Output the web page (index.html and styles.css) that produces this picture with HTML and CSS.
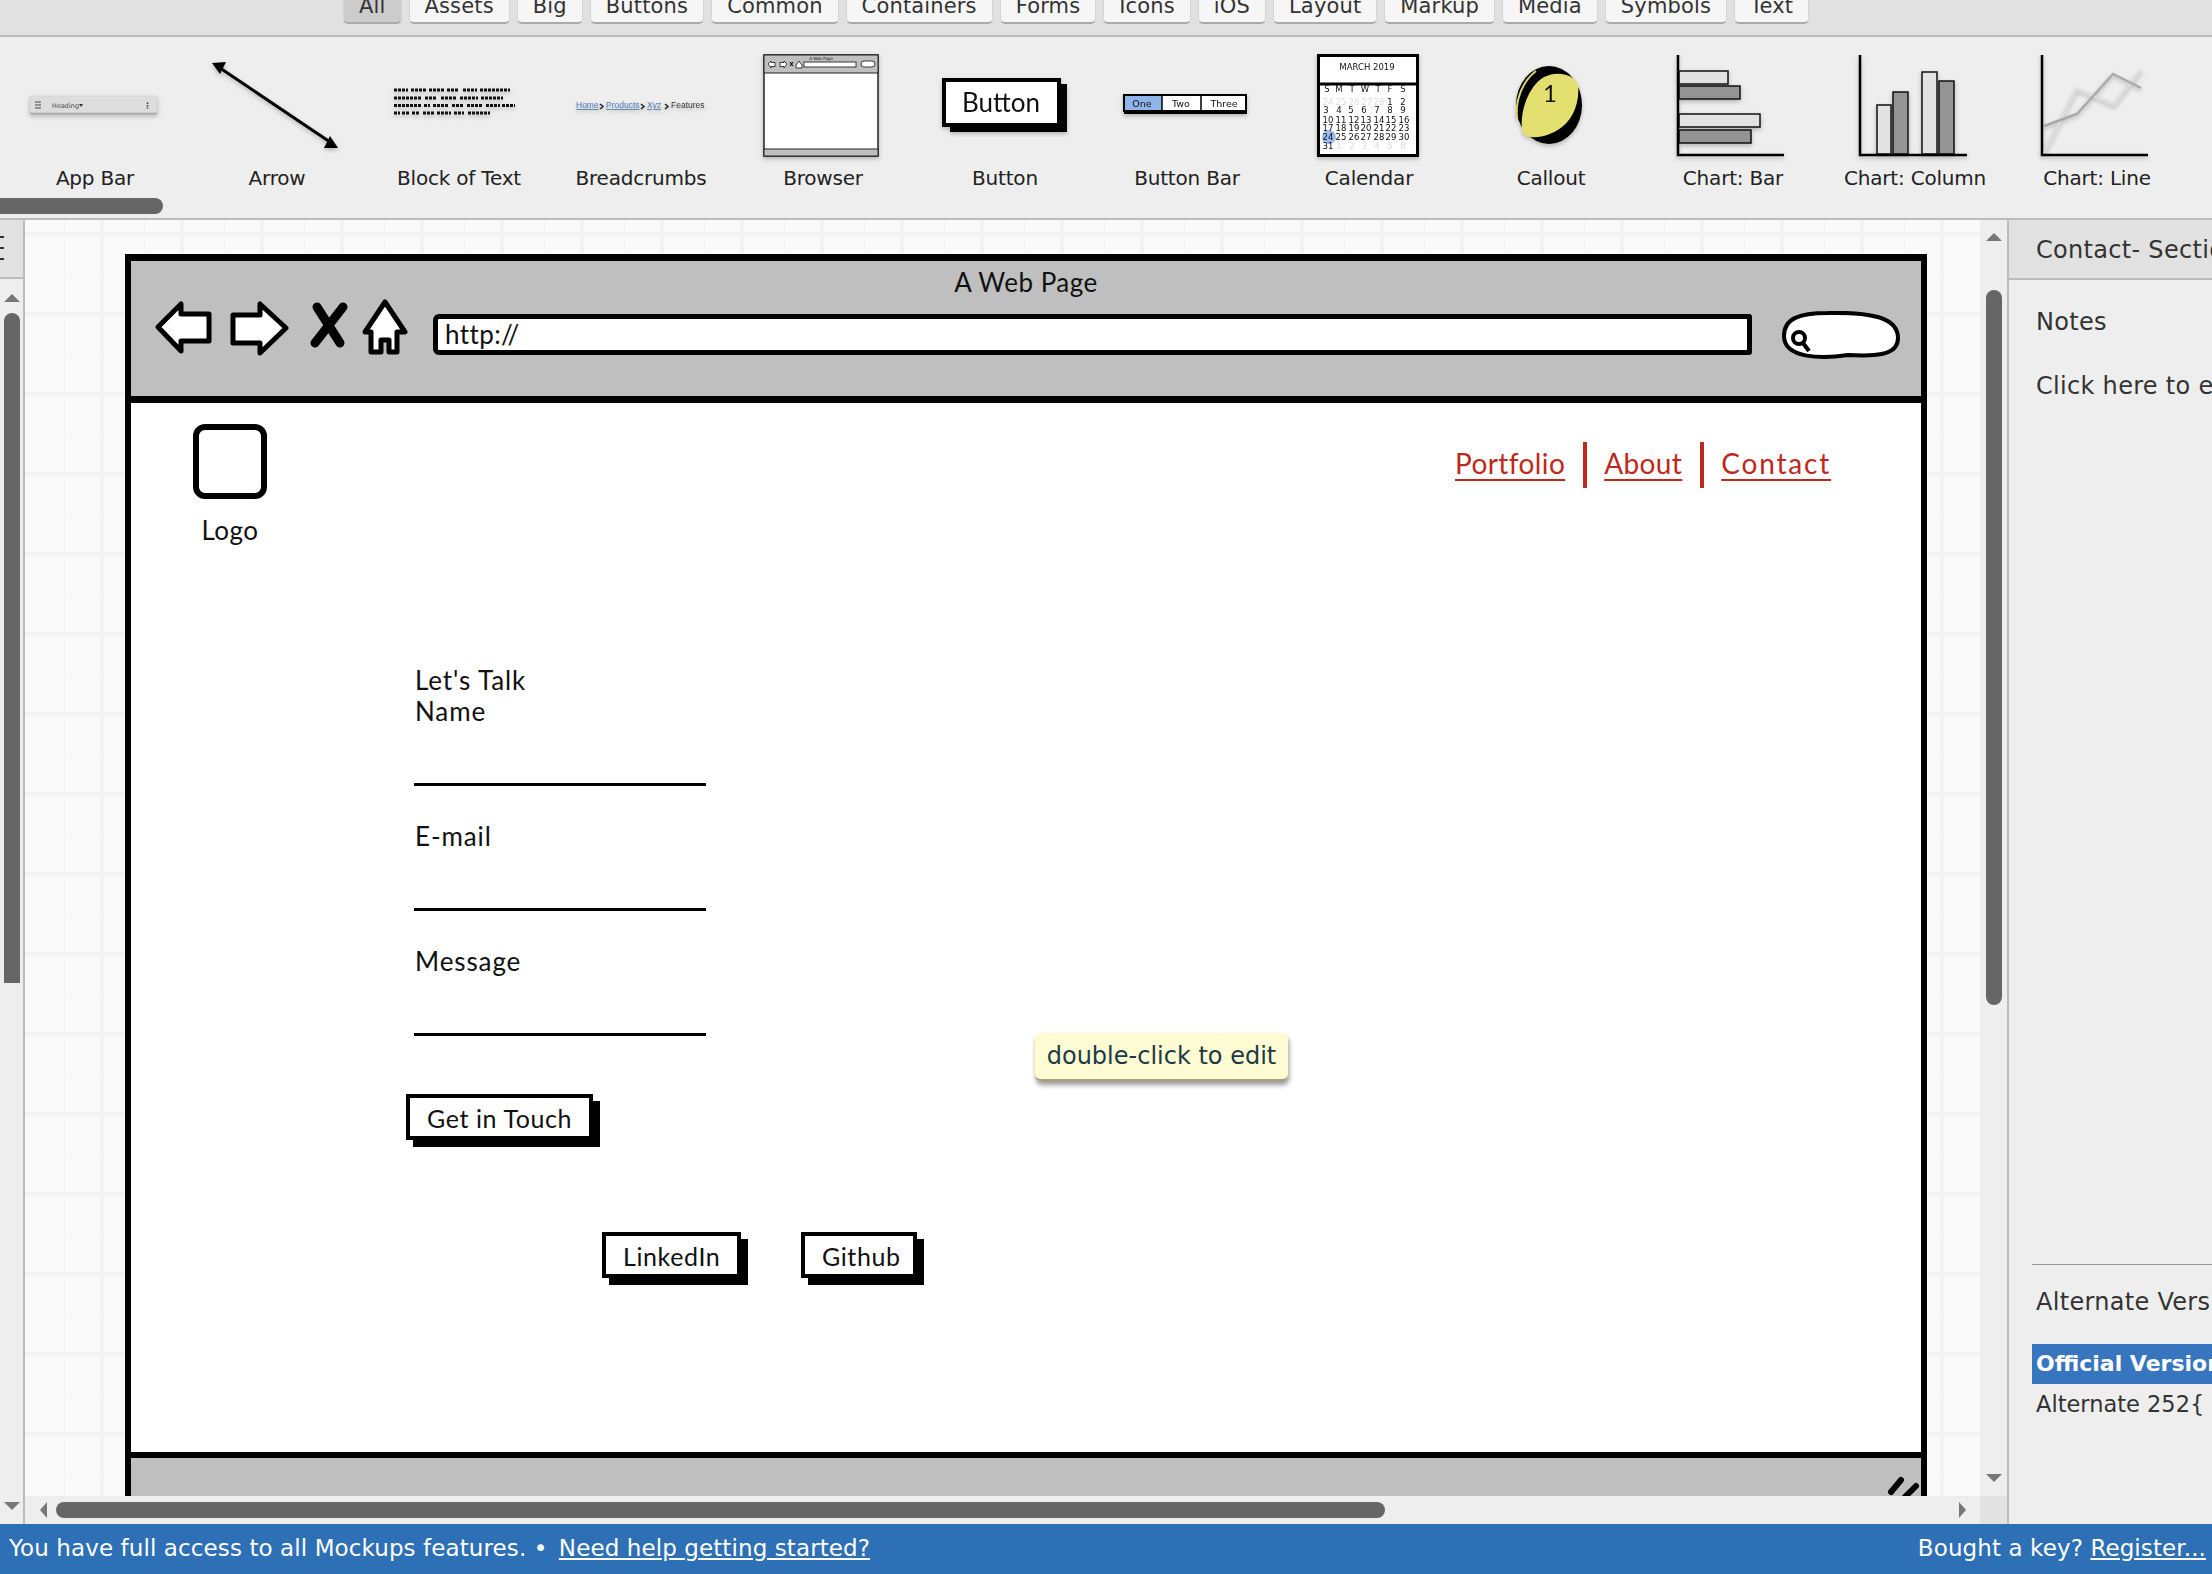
FILE: index.html
```html
<!DOCTYPE html>
<html lang="en">
<head>
    <meta charset="UTF-8">
    <title>Balsamiq Mockups</title>
    <link rel="stylesheet" href="styles.css">
</head>
<body>

    <!-- Filter tabs -->
    <div class="filter-bar">
        <div class="tab selected">All</div>
        <div class="tab">Assets</div>
        <div class="tab">Big</div>
        <div class="tab">Buttons</div>
        <div class="tab">Common</div>
        <div class="tab">Containers</div>
        <div class="tab">Forms</div>
        <div class="tab">Icons</div>
        <div class="tab">iOS</div>
        <div class="tab">Layout</div>
        <div class="tab">Markup</div>
        <div class="tab">Media</div>
        <div class="tab">Symbols</div>
        <div class="tab">Text</div>
    </div>

    <!-- Component palette -->
    <div class="palette">
        <div class="palette-row">
            <div class="palette-item">
                <svg class="thumb" viewBox="4 50 182 110">
                    <rect x="30" y="96" width="127" height="17" rx="1" fill="#ddd" stroke="#ccc" stroke-width=".5"/>
                    <path d="M30 113.500h127" stroke="#aaa" stroke-width="1.500"/>
                    <path d="M35 102h6M35 105h6M35 108h6" stroke="#444"/>
                    <text x="52" y="108" class="t-tiny">Heading</text>
                    <path d="M79 104h4l-2 3z" fill="#333"/>
                    <path d="M147.500 102.500v6" stroke="#333" stroke-width="1.500" stroke-dasharray="1.500 1"/>
                </svg>
                <div class="palette-label">App Bar</div>
            </div>
            <div class="palette-item">
                <svg class="thumb" viewBox="186 50 182 110">
                    <path d="M220 68L330 142" stroke="#000" stroke-width="3"/>
                    <path d="M212 63l14-1-6 12z" fill="#000"/>
                    <path d="M338 148l-14 0 6-12z" fill="#000"/>
                </svg>
                <div class="palette-label">Arrow</div>
            </div>
            <div class="palette-item">
                <svg class="thumb" viewBox="368 50 182 110">
                    <g stroke="#111" stroke-width="3" stroke-dasharray="3 1">
                        <path d="M394 90h14M411 90h15M429 90h15M447 90h12M463 90h14M480 90h30"/>
                        <path d="M394 98h28M425 98h12M441 98h16M460 98h18M481 98h22"/>
                        <path d="M394 105.500h28M424 105.500h6M433 105.500h16M452 105.500h12M467 105.500h16M486 105.500h14M502 105.500h13"/>
                        <path d="M394 113h6M402 113h8M412 113h8M423 113h12M437 113h14M454 113h10M468 113h22"/>
                    </g>
                </svg>
                <div class="palette-label">Block of Text</div>
            </div>
            <div class="palette-item">
                <svg class="thumb" viewBox="550 50 182 110">
                    <text x="576" y="108" class="t-crumb t-link">Home</text>
                    <path d="M600 104l3 2.500-3 2.500" class="crumb-sep"/>
                    <text x="606" y="108" class="t-crumb t-link">Products</text>
                    <path d="M641 104l3 2.500-3 2.500" class="crumb-sep"/>
                    <text x="647" y="108" class="t-crumb t-link">Xyz</text>
                    <path d="M665 104l3 2.500-3 2.500" class="crumb-sep"/>
                    <text x="671" y="108" class="t-crumb">Features</text>
                </svg>
                <div class="palette-label">Breadcrumbs</div>
            </div>
            <div class="palette-item">
                <svg class="thumb" viewBox="732 50 182 110">
                    <rect x="764" y="55" width="114" height="101" fill="#fff" stroke="#222" stroke-width="1.500"/>
                    <rect x="764" y="55" width="114" height="18" fill="#bfbfbf" stroke="#222"/>
                    <rect x="764" y="149" width="114" height="7" fill="#bfbfbf" stroke="#222"/>
                    <text x="821" y="60" text-anchor="middle" class="t-mini">A Web Page</text>
                    <path d="M768 64l3-3v1.500h4v4h-4v1.500zM787 64l-3-3v1.500h-4v4h4v1.500z" fill="#fff" stroke="#111" stroke-width=".8"/>
                    <path d="M790 62l3 4M793 62l-3 4" stroke="#111" stroke-width="1.200"/>
                    <path d="M796 65l3-4 3 4v3h-6z" fill="#fff" stroke="#111" stroke-width=".8"/>
                    <rect x="804" y="62" width="52" height="5" fill="#fff" stroke="#111" stroke-width=".8"/>
                    <rect x="861" y="61" width="14" height="6" rx="3" fill="#fff" stroke="#111" stroke-width=".8"/>
                </svg>
                <div class="palette-label">Browser</div>
            </div>
            <div class="palette-item">
                <svg class="thumb" viewBox="914 50 182 110">
                    <rect x="950" y="84" width="117" height="48" fill="#000"/>
                    <rect x="944" y="80" width="115" height="45" fill="#fff" stroke="#000" stroke-width="4"/>
                    <text x="1001" y="112" text-anchor="middle" class="t-sketch t-button">Button</text>
                </svg>
                <div class="palette-label">Button</div>
            </div>
            <div class="palette-item">
                <svg class="thumb" viewBox="1096 50 182 110">
                    <rect x="1124" y="96" width="123" height="18" fill="#000"/>
                    <rect x="1124" y="95" width="122" height="16" fill="#fff" stroke="#000" stroke-width="2"/>
                    <rect x="1125" y="96" width="37" height="14" fill="#8fb4ea"/>
                    <path d="M1162 95v16M1201 95v16" stroke="#000" stroke-width="1.500"/>
                    <text x="1142" y="107" text-anchor="middle" class="t-small">One</text>
                    <text x="1181" y="107" text-anchor="middle" class="t-small">Two</text>
                    <text x="1224" y="107" text-anchor="middle" class="t-small">Three</text>
                </svg>
                <div class="palette-label">Button Bar</div>
            </div>
            <div class="palette-item">
                <svg class="thumb" viewBox="1278 50 182 110">
                    <rect x="1318.500" y="55.500" width="99" height="100" fill="#fff" stroke="#000" stroke-width="3"/>
                    <path d="M1318 84h100" stroke="#000" stroke-width="3"/>
                    <text x="1367" y="70" text-anchor="middle" class="t-cal">MARCH 2019</text>
                    <circle cx="1329" cy="137" r="7" fill="#9abdf0"/>
                    <g class="t-cal" text-anchor="middle">
                        <text y="92"><tspan x="1327">S</tspan><tspan x="1339">M</tspan><tspan x="1352">T</tspan><tspan x="1365">W</tspan><tspan x="1378">T</tspan><tspan x="1390">F</tspan><tspan x="1403">S</tspan></text>
                        <text y="105" class="t-faded"><tspan x="1328">24</tspan><tspan x="1341">25</tspan><tspan x="1354">26</tspan><tspan x="1367">27</tspan><tspan x="1379">28</tspan></text>
                        <text y="105"><tspan x="1390">1</tspan><tspan x="1403">2</tspan></text>
                        <text y="113"><tspan x="1326">3</tspan><tspan x="1339">4</tspan><tspan x="1351">5</tspan><tspan x="1364">6</tspan><tspan x="1377">7</tspan><tspan x="1390">8</tspan><tspan x="1403">9</tspan></text>
                        <text y="123"><tspan x="1328">10</tspan><tspan x="1341">11</tspan><tspan x="1354">12</tspan><tspan x="1366">13</tspan><tspan x="1379">14</tspan><tspan x="1391">15</tspan><tspan x="1404">16</tspan></text>
                        <text y="131"><tspan x="1328">17</tspan><tspan x="1341">18</tspan><tspan x="1354">19</tspan><tspan x="1366">20</tspan><tspan x="1379">21</tspan><tspan x="1391">22</tspan><tspan x="1404">23</tspan></text>
                        <text y="140"><tspan x="1328">24</tspan><tspan x="1341">25</tspan><tspan x="1354">26</tspan><tspan x="1366">27</tspan><tspan x="1379">28</tspan><tspan x="1391">29</tspan><tspan x="1404">30</tspan></text>
                        <text y="149"><tspan x="1328">31</tspan></text>
                        <text y="149" class="t-faded"><tspan x="1339">1</tspan><tspan x="1352">2</tspan><tspan x="1364">3</tspan><tspan x="1377">4</tspan><tspan x="1390">5</tspan><tspan x="1403">6</tspan></text>
                    </g>
                </svg>
                <div class="palette-label">Calendar</div>
            </div>
            <div class="palette-item">
                <svg class="thumb" viewBox="1460 50 182 110">
                    <ellipse cx="1549" cy="105" rx="33" ry="39" fill="#000"/>
                    <path d="M1517 118C1515 98 1524 80 1536 71" fill="none" stroke="#d8d568" stroke-width="2"/>
                    <path d="M1523 134C1518 115 1528 86 1544 77C1556 71 1572 73 1578 84C1580 100 1574 118 1562 127C1550 136 1532 141 1523 134Z" fill="#e3e070"/>
                    <text x="1550" y="102" text-anchor="middle" class="t-sketch t-callout">1</text>
                </svg>
                <div class="palette-label">Callout</div>
            </div>
            <div class="palette-item">
                <svg class="thumb" viewBox="1642 50 182 110">
                    <g stroke="#111" stroke-width="1.500">
                        <rect x="1679" y="71" width="49" height="13" fill="#e2e2e2"/>
                        <rect x="1679" y="86" width="61" height="13" fill="#949494"/>
                        <rect x="1679" y="114" width="81" height="13" fill="#e2e2e2"/>
                        <rect x="1679" y="130" width="72" height="13" fill="#949494"/>
                    </g>
                    <path d="M1678 55v100h106" fill="none" stroke="#000" stroke-width="2.500"/>
                </svg>
                <div class="palette-label">Chart: Bar</div>
            </div>
            <div class="palette-item">
                <svg class="thumb" viewBox="1824 50 182 110">
                    <g stroke="#111" stroke-width="1.500">
                        <rect x="1877" y="105" width="14" height="49" fill="#e2e2e2"/>
                        <rect x="1893" y="92" width="15" height="62" fill="#949494"/>
                        <rect x="1922" y="72" width="15" height="82" fill="#e2e2e2"/>
                        <rect x="1939" y="81" width="15" height="73" fill="#949494"/>
                    </g>
                    <path d="M1860 55v100h107" fill="none" stroke="#000" stroke-width="2.500"/>
                </svg>
                <div class="palette-label">Chart: Column</div>
            </div>
            <div class="palette-item">
                <svg class="thumb" viewBox="2006 50 182 110">
                    <path d="M2044 153L2077 89L2114 105L2141 70" fill="none" stroke="#ddd" stroke-width="2.500"/>
                    <path d="M2044 126L2077 114L2113 74L2141 88" fill="none" stroke="#aaa" stroke-width="2.500"/>
                    <path d="M2042 55v100h106" fill="none" stroke="#000" stroke-width="2.500"/>
                </svg>
                <div class="palette-label">Chart: Line</div>
            </div>
        </div>
        <div class="palette-thumb"></div>
    </div>

    <div class="workspace">

        <!-- Left strip -->
        <div class="side-strip">
            <div class="strip-head">
                <div class="strip-mark"></div>
                <div class="strip-mark"></div>
                <div class="strip-mark"></div>
            </div>
            <div class="arrow-up strip-up"></div>
            <div class="strip-thumb"></div>
            <div class="arrow-down strip-down"></div>
        </div>

        <div class="canvas-area">
            <div class="canvas">
                <div class="browser">
                    <div class="browser-bar">
                        <div class="browser-title">A Web Page</div>
                        <div class="browser-tools">
                            <svg class="nav-icons" viewBox="154 296 256 62">
                                <path d="M158 327L181 304V314H209V341H181V351Z" fill="#fff" stroke="#000" stroke-width="5" stroke-linejoin="round"/>
                                <path d="M286 328L260 304V315H233V343H260V353Z" fill="#fff" stroke="#000" stroke-width="5" stroke-linejoin="round"/>
                                <path d="M317 307L340 343M343 307L315 343" stroke="#000" stroke-width="9" stroke-linecap="round"/>
                                <path d="M385 302L405 332H397V352H389V340H381V352H371V332H365Z" fill="#fff" stroke="#000" stroke-width="5" stroke-linejoin="round"/>
                            </svg>
                            <div class="url-box">http://</div>
                            <svg class="search-box" viewBox="1783 311 119 49">
                                <path d="M1786 336C1786 319 1800 313 1830 313C1872 312 1900 317 1900 338C1900 353 1885 357 1850 355C1825 359 1786 359 1786 336Z" fill="#fff" stroke="#000" stroke-width="4"/>
                                <circle cx="1801" cy="338" r="6" fill="none" stroke="#000" stroke-width="4"/>
                                <path d="M1805 343L1811 351" stroke="#000" stroke-width="4"/>
                            </svg>
                        </div>
                    </div>

                    <div class="browser-page">
                        <div class="page-head">
                            <div class="logo">
                                <div class="logo-box"></div>
                                <div class="logo-label">Logo</div>
                            </div>
                            <div class="page-nav">
                                <a class="nav-link">Portfolio</a>
                                <a class="nav-link">About</a>
                                <a class="nav-link nav-contact">Contact</a>
                            </div>
                        </div>

                        <div class="contact-form">
                            <div class="form-title">Let's Talk</div>
                            <div class="field">
                                <div class="field-label">Name</div>
                                <div class="field-line"></div>
                            </div>
                            <div class="field">
                                <div class="field-label">E-mail</div>
                                <div class="field-line"></div>
                            </div>
                            <div class="field">
                                <div class="field-label">Message</div>
                                <div class="field-line"></div>
                            </div>
                            <div class="sketch-button submit-button">Get in Touch</div>
                            <div class="social-row">
                                <div class="sketch-button linkedin-button">LinkedIn</div>
                                <div class="sketch-button github-button">Github</div>
                            </div>
                        </div>

                        <div class="edit-tip">double-click to edit</div>
                    </div>

                    <div class="browser-foot">
                        <svg class="resize-mark" viewBox="0 0 34 26">
                            <path d="M6 20L16 8M18 27L31 14" stroke="#000" stroke-width="6" stroke-linecap="round"/>
                        </svg>
                    </div>
                </div>
            </div>

            <div class="v-scroll">
                <div class="arrow-up v-up"></div>
                <div class="v-thumb"></div>
                <div class="arrow-down v-down"></div>
            </div>

            <div class="h-scroll">
                <div class="arrow-left"></div>
                <div class="h-thumb"></div>
                <div class="arrow-right"></div>
            </div>
            <div class="scroll-corner"></div>
        </div>

        <!-- Right panel -->
        <div class="side-panel">
            <div class="panel-head">Contact- Section</div>
            <div class="panel-line notes-title">Notes</div>
            <div class="panel-line notes-text">Click here to edit</div>
            <div class="panel-versions">
                <div class="panel-line versions-title">Alternate Versions</div>
                <div class="version selected">Official Version</div>
                <div class="version">Alternate 252{</div>
            </div>
        </div>
    </div>

    <!-- Status bar -->
    <div class="status-bar">
        <div>You have full access to all Mockups features. • <a class="status-link help-link">Need help getting started?</a></div>
        <div>Bought a key? <a class="status-link">Register...</a></div>
    </div>

</body>
</html>
```

FILE: styles.css
```css
html, body {
    height: 100%;
}

body {
    margin: 0;
    height: 1574px;
    display: flex;
    flex-direction: column;
    overflow: hidden;
    background-color: #eee;
    font-family: "DejaVu Sans", sans-serif;
    font-size: 20px;
    color: #333;
}

/* filter tabs */
.filter-bar {
    height: 37px;
    flex: none;
    display: flex;
    align-items: flex-end;
    gap: 7px;
    padding: 0 0 11px 343px;
    box-sizing: border-box;
    background-color: #e1e1e1;
    border-bottom: 2px solid #bbb;
    overflow: hidden;
}

.tab {
    flex: none;
    padding: 0 15px 4px;
    line-height: 24px;
    font-size: 21px;
    background-color: #f6f6f6;
    border: 1px solid #d4d4d4;
    border-top: none;
    border-bottom: 2px solid #aaa;
    border-radius: 0 0 5px 5px;
    color: #333;
    letter-spacing: 0.15px;
}

.tab.selected {
    background-color: #ccc;
}

/* palette */
.palette {
    flex: none;
    height: 183px;
    box-sizing: border-box;
    padding-top: 13px;
    border-bottom: 2px solid #bbb;
    overflow: hidden;
}

.palette-row {
    display: flex;
    padding-left: 4px;
}

.palette-item {
    flex: none;
    width: 182px;
    text-align: center;
}

.thumb {
    display: block;
    width: 182px;
    height: 110px;
    filter: blur(0.4px) drop-shadow(0 2px 2px rgba(0, 0, 0, 0.25));
}

.palette-label {
    margin-top: 6px;
    line-height: 24px;
    color: #222;
    letter-spacing: -0.2px;
}

.palette-thumb {
    width: 163px;
    height: 16px;
    margin-top: 8px;
    background-color: #666;
    border-radius: 0 8px 8px 0;
}

.t-tiny {
    font-size: 6.5px;
    fill: #444;
}

.t-mini {
    font-size: 4px;
    fill: #222;
}

.t-crumb {
    font-family: "Liberation Sans", sans-serif;
    font-size: 8.5px;
    fill: #333;
}

.t-link {
    fill: #4a7db5;
    text-decoration: underline;
}

.crumb-sep {
    fill: none;
    stroke: #222;
    stroke-width: 1.5;
}

.t-small {
    font-size: 9.5px;
    fill: #111;
}

.t-cal {
    font-size: 8.5px;
    fill: #111;
}

.t-faded {
    fill: #ddd;
}

.t-sketch {
    font-family: "Lato", sans-serif;
}

.t-button {
    font-size: 26px;
    fill: #111;
}

.t-callout {
    font-size: 24px;
    fill: #111;
}

/* main area */
.workspace {
    flex: 1;
    min-height: 0;
    display: flex;
}

.side-strip {
    flex: none;
    width: 23px;
    display: flex;
    flex-direction: column;
    align-items: center;
    border-right: 2px solid #bbb;
}

.strip-head {
    align-self: stretch;
    height: 59px;
    box-sizing: border-box;
    padding-top: 16px;
    background-color: #e1e1e1;
    border-bottom: 2px solid #bbb;
}

.strip-mark {
    width: 4px;
    height: 2px;
    margin-bottom: 9px;
    background-color: #333;
}

.arrow-up, .arrow-down {
    flex: none;
    width: 0;
    height: 0;
    border-left: 8px solid transparent;
    border-right: 8px solid transparent;
}

.arrow-up {
    border-bottom: 8px solid #777;
}

.arrow-down {
    border-top: 8px solid #777;
}

.strip-up {
    margin-top: 15px;
}

.strip-thumb {
    width: 16px;
    height: 670px;
    margin-top: 11px;
    background-color: #666;
    border-radius: 8px 8px 0 0;
}

.strip-down {
    margin-top: auto;
    margin-bottom: 14px;
}

.canvas-area {
    flex: 1;
    min-width: 0;
    display: grid;
    grid-template-columns: 1fr 27px;
    grid-template-rows: 1fr 28px;
}

.canvas {
    min-height: 0;
    overflow: hidden;
    padding: 34px 0 0 100px;
    background-color: #fafafa;
    background-image:
        linear-gradient(90deg, #f3f3f3 4px, transparent 4px),
        linear-gradient(#f3f3f3 4px, transparent 4px),
        linear-gradient(90deg, #f4f4f4 1px, transparent 1px),
        linear-gradient(#f4f4f4 1px, transparent 1px);
    background-size: 80px 80px;
    background-position: 75px 0, 0 12px, 39px 0, 0 53px;
}

.v-scroll {
    display: flex;
    flex-direction: column;
    align-items: center;
    min-height: 0;
}

.v-up {
    margin-top: 13px;
}

.v-thumb {
    width: 16px;
    height: 715px;
    margin-top: 49px;
    background-color: #666;
    border-radius: 8px;
}

.v-down {
    margin-top: auto;
    margin-bottom: 14px;
}

.h-scroll {
    display: flex;
    align-items: center;
    padding: 0 14px 0 15px;
}

.arrow-left, .arrow-right {
    flex: none;
    width: 0;
    height: 0;
    border-top: 8px solid transparent;
    border-bottom: 8px solid transparent;
}

.arrow-left {
    border-right: 7px solid #777;
}

.arrow-right {
    margin-left: auto;
    border-left: 7px solid #777;
}

.h-thumb {
    width: 1329px;
    height: 16px;
    margin-left: 9px;
    background-color: #666;
    border-radius: 8px;
}

.scroll-corner {
    background-color: #e2e2e2;
}

/* the mockup itself */
.browser {
    width: 1802px;
    height: 1270px;
    box-sizing: border-box;
    display: flex;
    flex-direction: column;
    background-color: #fff;
    border: 6px solid #000;
    border-top-width: 7px;
    color: #111;
    font-family: "Lato", sans-serif;
    font-size: 26px;
}

.browser-bar {
    flex: none;
    height: 135px;
    background-color: #bfbfbf;
    border-bottom: 7px solid #000;
}

.browser-title {
    padding-top: 7px;
    line-height: 28px;
    text-align: center;
    letter-spacing: 0.5px;
}

.browser-tools {
    display: flex;
    align-items: flex-start;
    padding: 0 0 0 23px;
}

.nav-icons {
    flex: none;
    width: 256px;
    height: 62px;
}

.url-box {
    flex: none;
    width: 1319px;
    height: 41px;
    box-sizing: border-box;
    margin: 18px 0 0 23px;
    padding-left: 7px;
    line-height: 31px;
    background-color: #fff;
    border: 5px solid #000;
    border-radius: 6px 3px 3px 6px;
    letter-spacing: 0.4px;
}

.search-box {
    flex: none;
    width: 119px;
    height: 49px;
    margin: 15px 0 0 29px;
}

.browser-page {
    flex: 1;
    min-height: 0;
    position: relative;
}

.page-head {
    display: flex;
    justify-content: space-between;
    padding: 21px 90px 0 62px;
}

.logo {
    width: 74px;
    text-align: center;
}

.logo-box {
    height: 75px;
    box-sizing: border-box;
    border: 6px solid #000;
    border-radius: 12px;
}

.logo-label {
    margin-top: 16px;
    line-height: 30px;
    letter-spacing: 0.5px;
}

.page-nav {
    display: flex;
    height: 46px;
    margin-top: 18px;
    font-size: 28px;
}

.nav-link {
    height: 46px;
    color: #c0281c;
    line-height: 42px;
    text-decoration: underline;
    text-decoration-thickness: 2px;
    text-underline-offset: 5px;
    letter-spacing: 0.4px;
}

.nav-link + .nav-link {
    margin-left: 18px;
    padding-left: 17px;
    border-left: 4px solid #c0281c;
}

.nav-contact {
    letter-spacing: 1.8px;
}

.contact-form {
    padding: 120px 0 0 283px;
}

.form-title, .field-label {
    line-height: 31px;
    padding-left: 1px;
    letter-spacing: 0.9px;
}

.field {
    margin-bottom: 35px;
}

.field-line {
    width: 292px;
    height: 56px;
    border-bottom: 3px solid #000;
}

.sketch-button {
    box-sizing: border-box;
    height: 46px;
    padding: 0 17px;
    line-height: 41px;
    font-size: 25px;
    white-space: nowrap;
    background-color: #fff;
    border: 4px solid #000;
    box-shadow: 7px 7px 0 #000;
    letter-spacing: 0.6px;
}

.submit-button {
    width: 187px;
    margin: 58px 0 0 -8px;
}

.social-row {
    display: flex;
    gap: 60px;
    margin: 92px 0 0 188px;
}

.linkedin-button {
    width: 139px;
}

.github-button {
    width: 116px;
}

.edit-tip {
    position: absolute;
    left: 904px;
    top: 630px;
    width: 253px;
    height: 48px;
    box-sizing: border-box;
    line-height: 46px;
    text-align: center;
    font-family: "DejaVu Sans", sans-serif;
    font-size: 24px;
    color: #1c3a46;
    background-color: #fffcd3;
    border-bottom: 2px solid #a5a078;
    border-radius: 6px;
    box-shadow: 1px 4px 5px rgba(0, 0, 0, 0.4);
}

.browser-foot {
    flex: none;
    height: 60px;
    position: relative;
    background-color: #bfbfbf;
    border-top: 6px solid #000;
}

.resize-mark {
    position: absolute;
    right: 2px;
    top: 14px;
    width: 34px;
    height: 26px;
}

/* right panel */
.side-panel {
    flex: none;
    width: 205px;
    box-sizing: border-box;
    border-left: 2px solid #bbb;
    display: flex;
    flex-direction: column;
    white-space: nowrap;
    overflow: hidden;
    font-size: 24px;
    letter-spacing: 0.3px;
}

.panel-head {
    height: 60px;
    box-sizing: border-box;
    padding-left: 27px;
    line-height: 60px;
    background-color: #e1e1e1;
    border-bottom: 2px solid #bbb;
}

.panel-line {
    padding-left: 27px;
    line-height: 30px;
}

.notes-title {
    margin-top: 27px;
}

.notes-text {
    margin-top: 34px;
}

.panel-versions {
    margin-top: auto;
    margin-bottom: 100px;
    margin-left: 23px;
    border-top: 1px solid #999;
}

.versions-title {
    padding-left: 4px;
    margin-top: 22px;
    margin-bottom: 27px;
}

.version {
    height: 40px;
    padding-left: 4px;
    line-height: 40px;
    font-size: 22.5px;
    letter-spacing: 0;
}

.version.selected {
    background-color: #3875bf;
    color: #fff;
    font-size: 22px;
    font-weight: bold;
}

/* status bar */
.status-bar {
    flex: none;
    height: 50px;
    box-sizing: border-box;
    display: flex;
    justify-content: space-between;
    padding: 0 6px 0 9px;
    line-height: 48px;
    font-size: 23px;
    letter-spacing: 0.1px;
    background-color: #2e70b6;
    color: #fff;
}

.status-link {
    color: #fff;
    text-decoration: underline;
}

.help-link {
    margin-left: 4px;
}
```
